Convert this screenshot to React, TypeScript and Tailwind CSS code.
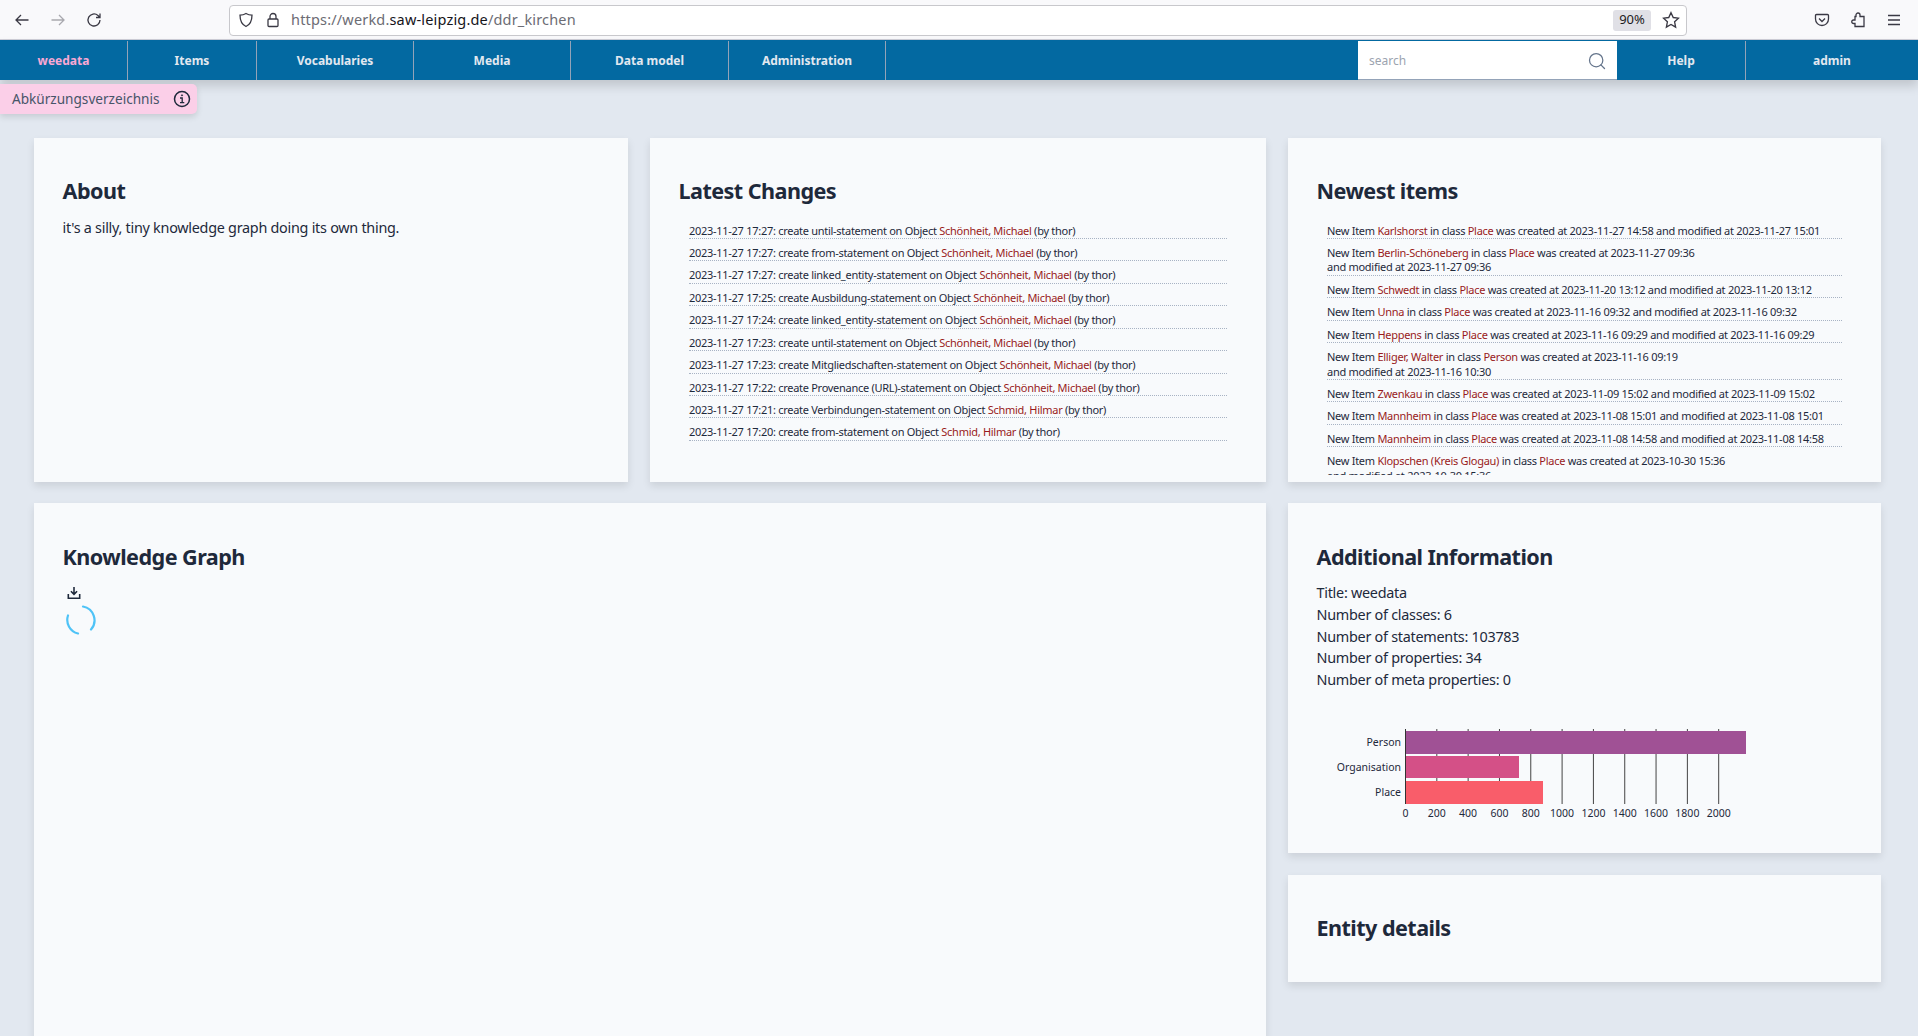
import React from "react";
import { Search } from "lucide-react";

const font = { fontFamily: '"Noto Sans", sans-serif' };

const changes: [string, string, string][] = [
  ["2023-11-27 17:27", "until", "Schönheit, Michael"],
  ["2023-11-27 17:27", "from", "Schönheit, Michael"],
  ["2023-11-27 17:27", "linked_entity", "Schönheit, Michael"],
  ["2023-11-27 17:25", "Ausbildung", "Schönheit, Michael"],
  ["2023-11-27 17:24", "linked_entity", "Schönheit, Michael"],
  ["2023-11-27 17:23", "until", "Schönheit, Michael"],
  ["2023-11-27 17:23", "Mitgliedschaften", "Schönheit, Michael"],
  ["2023-11-27 17:22", "Provenance (URL)", "Schönheit, Michael"],
  ["2023-11-27 17:21", "Verbindungen", "Schmid, Hilmar"],
  ["2023-11-27 17:20", "from", "Schmid, Hilmar"],
];

const items: [string, string, string, string, boolean][] = [
  ["Karlshorst", "Place", "2023-11-27 14:58", "2023-11-27 15:01", false],
  ["Berlin-Schöneberg", "Place", "2023-11-27 09:36", "2023-11-27 09:36", true],
  ["Schwedt", "Place", "2023-11-20 13:12", "2023-11-20 13:12", false],
  ["Unna", "Place", "2023-11-16 09:32", "2023-11-16 09:32", false],
  ["Heppens", "Place", "2023-11-16 09:29", "2023-11-16 09:29", false],
  ["Elliger, Walter", "Person", "2023-11-16 09:19", "2023-11-16 10:30", true],
  ["Zwenkau", "Place", "2023-11-09 15:02", "2023-11-09 15:02", false],
  ["Mannheim", "Place", "2023-11-08 15:01", "2023-11-08 15:01", false],
  ["Mannheim", "Place", "2023-11-08 14:58", "2023-11-08 14:58", false],
  ["Klopschen (Kreis Glogau)", "Place", "2023-10-30 15:36", "2023-10-30 15:36", true],
];

const tabs: [string, string][] = [
  ["weedata", "w-[128px] text-[#f9a8d4]"],
  ["Items", "w-[129px] text-[#e2e8f0]"],
  ["Vocabularies", "w-[157px] text-[#e2e8f0]"],
  ["Media", "w-[157px] text-[#e2e8f0]"],
  ["Data model", "w-[158px] text-[#e2e8f0]"],
  ["Administration", "w-[157px] text-[#e2e8f0]"],
];

function Browser() {
  return (
    <div className="flex h-[40px] items-center bg-[#f9f9fb] border-b border-[#cfcfd8] pt-[1px] text-[#1c1b22]">
      <div className="flex w-[229px] items-center pl-[14px] gap-[20px]">
        <svg width="16" height="16" viewBox="0 0 16 16" fill="none" stroke="#3a3944" strokeWidth="1.3"><path d="M14.5 8H2M7 3 2 8l5 5" /></svg>
        <svg width="16" height="16" viewBox="0 0 16 16" fill="none" stroke="#a9a9ae" strokeWidth="1.3"><path d="M1.5 8H14M9 3l5 5-5 5" /></svg>
        <svg width="16" height="16" viewBox="0 0 16 16" fill="none" stroke="#3a3944" strokeWidth="1.3"><path d="M14 8a6 6 0 1 1-2-4.5L14 5.5M14 1.5v4h-4" /></svg>
      </div>
      <div className="flex h-[31px] w-[1458px] items-center rounded-[4px] border border-[#c8c8cc] bg-white pl-[7px] pr-[3px]">
        <svg width="16" height="16" viewBox="0 0 16 16" fill="none" stroke="#3a3944" strokeWidth="1.3" className="ml-[1px]"><path d="M8 1.5c2 1.2 3.800 1.600 6 1.600 0 5.500-1.800 9.600-6 11.400C3.800 12.700 2 8.600 2 3.100c2.200 0 4-.4 6-1.600Z" /></svg>
        <svg width="16" height="16" viewBox="0 0 16 16" fill="none" stroke="#3a3944" strokeWidth="1.3" className="ml-[11px]"><rect x="3" y="7" width="10" height="7.500" rx="1" /><path d="M5 7V4.500a3 3 0 0 1 6 0V7" /></svg>
        <span className="ml-[10px] text-[14.5px] tracking-[0.17px] text-[#6c6c74]">https://werkd.<span className="text-[#15141a]">saw-leipzig.de</span>/ddr_kirchen</span>
        <span className="ml-auto flex h-[21px] w-[38px] items-center justify-center rounded-[3px] bg-[#e0e0e6] text-[13px]">90%</span>
        <svg width="18" height="18" viewBox="0 0 16 16" fill="none" stroke="#3a3944" strokeWidth="1.200" className="ml-[11px] mr-[3px]"><path d="m8 1.500 2 4.300 4.600.6-3.400 3.200.9 4.700L8 12l-4.100 2.300.9-4.700L1.400 6.400 6 5.800Z" /></svg>
      </div>
      <div className="ml-auto flex items-center gap-[20px] pr-[16px]">
        <svg width="16" height="16" viewBox="0 0 16 16" fill="none" stroke="#3a3944" strokeWidth="1.3"><path d="M2.500 2.500h11a1 1 0 0 1 1 1V7a6.500 6.500 0 0 1-13 0V3.500a1 1 0 0 1 1-1Z" /><path d="m5 6.500 3 3 3-3" /></svg>
        <svg width="16" height="16" viewBox="0 0 16 16" fill="none" stroke="#3a3944" strokeWidth="1.3"><path d="M6 4.500V3a2 2 0 0 1 4 0v1.500h4v10H5V11.500H3.500a1.500 1.500 0 0 1 0-3.500H5V4.500Z" /></svg>
        <svg width="16" height="16" viewBox="0 0 16 16" fill="none" stroke="#3a3944" strokeWidth="1.3"><path d="M2 3.500h12M2 8h12M2 12.500h12" /></svg>
      </div>
    </div>
  );
}

function Nav() {
  return (
    <div className="flex h-[40px] bg-[#0369a1] pt-[1px] shadow-[0_6px_10px_rgba(0,0,0,0.15)] text-[12px] font-bold">
      {tabs.map(([t, c]) => (
        <div key={t} className={"flex items-center justify-center border-r border-[#94a3b8] " + c}>{t}</div>
      ))}
      <div className="ml-auto flex w-[259px] items-center justify-between bg-white pt-[1px] pl-[11px] pr-[10px] border-b border-[#94a3b8]">
        <span className="text-[12px] font-normal text-[#9ca3af]">search</span>
        <Search size={20} strokeWidth={1.5} className="text-[#64748b]" />
      </div>
      <div className="flex w-[129px] items-center justify-center border-r border-[#94a3b8] text-[#e2e8f0]">Help</div>
      <div className="flex w-[172px] items-center justify-center text-[#e2e8f0]">admin</div>
    </div>
  );
}

function Card({ title, className, children }: { title: string; className?: string; children?: React.ReactNode }) {
  return (
    <section className={"bg-[#f8fafc] px-[28.5px] shadow-[0_4px_8px_rgba(0,0,0,0.1)] " + (className ?? "")}>
      <h2 className="text-[21.6px] leading-[28px] font-bold tracking-[-0.55px] text-[#1e293b]">{title}</h2>
      {children}
    </section>
  );
}

function Row({ children }: { children: React.ReactNode }) {
  return <li className="pt-[3.5px] mb-[3.54px] text-[11px] leading-[14.4px] tracking-[-0.28px] text-[#1e293b] border-b border-dotted border-[#a8b3c4]">{children}</li>;
}

function Chart() {
  const ticks = [0, 200, 400, 600, 800, 1000, 1200, 1400, 1600, 1800, 2000];
  return (
    <svg width="430" height="110" viewBox="0 0 430 110" className="block mt-[33px] ml-[8px]">
      {ticks.map((t, i) => {
        const x = 80.500 + i * 31.32;
        return (
          <g key={t}>
            <line x1={x} x2={x} y1="6" y2="81" stroke={i === 0 ? "#333" : "#444"} />
            <text x={x} y="94" textAnchor="middle" fontSize="10.500" fill="#1e293b">{t}</text>
          </g>
        );
      })}
      <rect x="81" y="8" width="340" height="23" fill="#a05195" />
      <rect x="81" y="33" width="113" height="22" fill="#d45087" />
      <rect x="81" y="58" width="137" height="23" fill="#f95d6a" />
      <text x="76" y="23" textAnchor="end" fontSize="10.500" fill="#1e293b">Person</text>
      <text x="76" y="48" textAnchor="end" fontSize="10.500" fill="#1e293b">Organisation</text>
      <text x="76" y="73" textAnchor="end" fontSize="10.500" fill="#1e293b">Place</text>
    </svg>
  );
}

export default function App() {
  return (
    <div style={font} className="h-screen overflow-hidden bg-[#e2e8f0]">
      <Browser />
      <Nav />
      <div className="mt-[4px] flex h-[30px] w-[197px] items-center justify-between rounded-r-[5px] bg-[#fbcfe8] pl-[12px] pr-[6px] text-[13.6px] text-[#475569] shadow-[0_3px_6px_rgba(0,0,0,0.12)]">
        <span>Abkürzungsverzeichnis</span>
        <svg width="18" height="18" viewBox="0 0 18 18" fill="none" stroke="#1e293b" strokeWidth="1.500">
          <circle cx="9" cy="9" r="7.500" />
          <path d="M7 8h2.200v4.500M7 12.700h4.300" strokeWidth="1.300" />
          <circle cx="9" cy="5.300" r="0.600" fill="#1e293b" strokeWidth="0.800" />
        </svg>
      </div>
      <div className="mt-[24px] ml-[34px] grid w-[1847px] grid-cols-[594px_616px_593px] gap-x-[22px] gap-y-[21px]">
        <Card title="About" className="h-[344px] pt-[39px]">
          <p className="mt-[12.4px] text-[14.400px] leading-[21.600px] tracking-[-0.27px] text-[#1e293b]">it's a silly, tiny knowledge graph doing its own thing.</p>
        </Card>
        <Card title="Latest Changes" className="h-[344px] pt-[39px]">
          <ul className="mx-[10.5px] mt-[15px]">
            {changes.map(([d, k, o], i) => (
              <Row key={i}>{d}: create {k}-statement on Object <span className="text-[#991b1b]">{o}</span> (by thor)</Row>
            ))}
          </ul>
        </Card>
        <Card title="Newest items" className="h-[344px] overflow-hidden pt-[39px]">
          <ul className="mx-[10.5px] mt-[15px] h-[254.500px] overflow-hidden">
            {items.map(([n, c, a, b, wrap], i) => (
              <Row key={i}>New Item <span className="text-[#991b1b]">{n}</span> in class <span className="text-[#991b1b]">{c}</span> was created at {a}{wrap ? <br /> : " "}and modified at {b}</Row>
            ))}
          </ul>
        </Card>
        <Card title="Knowledge Graph" className="col-span-2 h-[700px] pt-[40px]">
          <svg width="14" height="14" viewBox="0 0 16 16" fill="none" stroke="#1e293b" strokeWidth="1.800" className="mt-[15px] ml-[4px]"><path d="M8 1v8M4.500 6 8 9.500 11.500 6" /><path d="M1.500 9v5h13V9" /></svg>
          <svg width="32" height="32" viewBox="0 0 32 32" fill="none" stroke="#4fc3f7" strokeWidth="2.200" strokeLinecap="round" className="mt-[4px] ml-[2px]"><path d="M18 2.500a14 14 0 0 1 8 23" /><path d="M13 29.500a14 14 0 0 1-10-18" /></svg>
        </Card>
        <div className="flex flex-col gap-[22px]">
          <Card title="Additional Information" className="h-[350px] pt-[40px]">
            <div className="mt-[11.4px] text-[14.400px] leading-[21.600px] tracking-[-0.27px] text-[#1e293b]">
              <p>Title: weedata</p>
              <p>Number of classes: 6</p>
              <p>Number of statements: 103783</p>
              <p>Number of properties: 34</p>
              <p>Number of meta properties: 0</p>
            </div>
            <Chart />
          </Card>
          <Card title="Entity details" className="h-[107px] pt-[39px]" />
        </div>
      </div>
    </div>
  );
}
